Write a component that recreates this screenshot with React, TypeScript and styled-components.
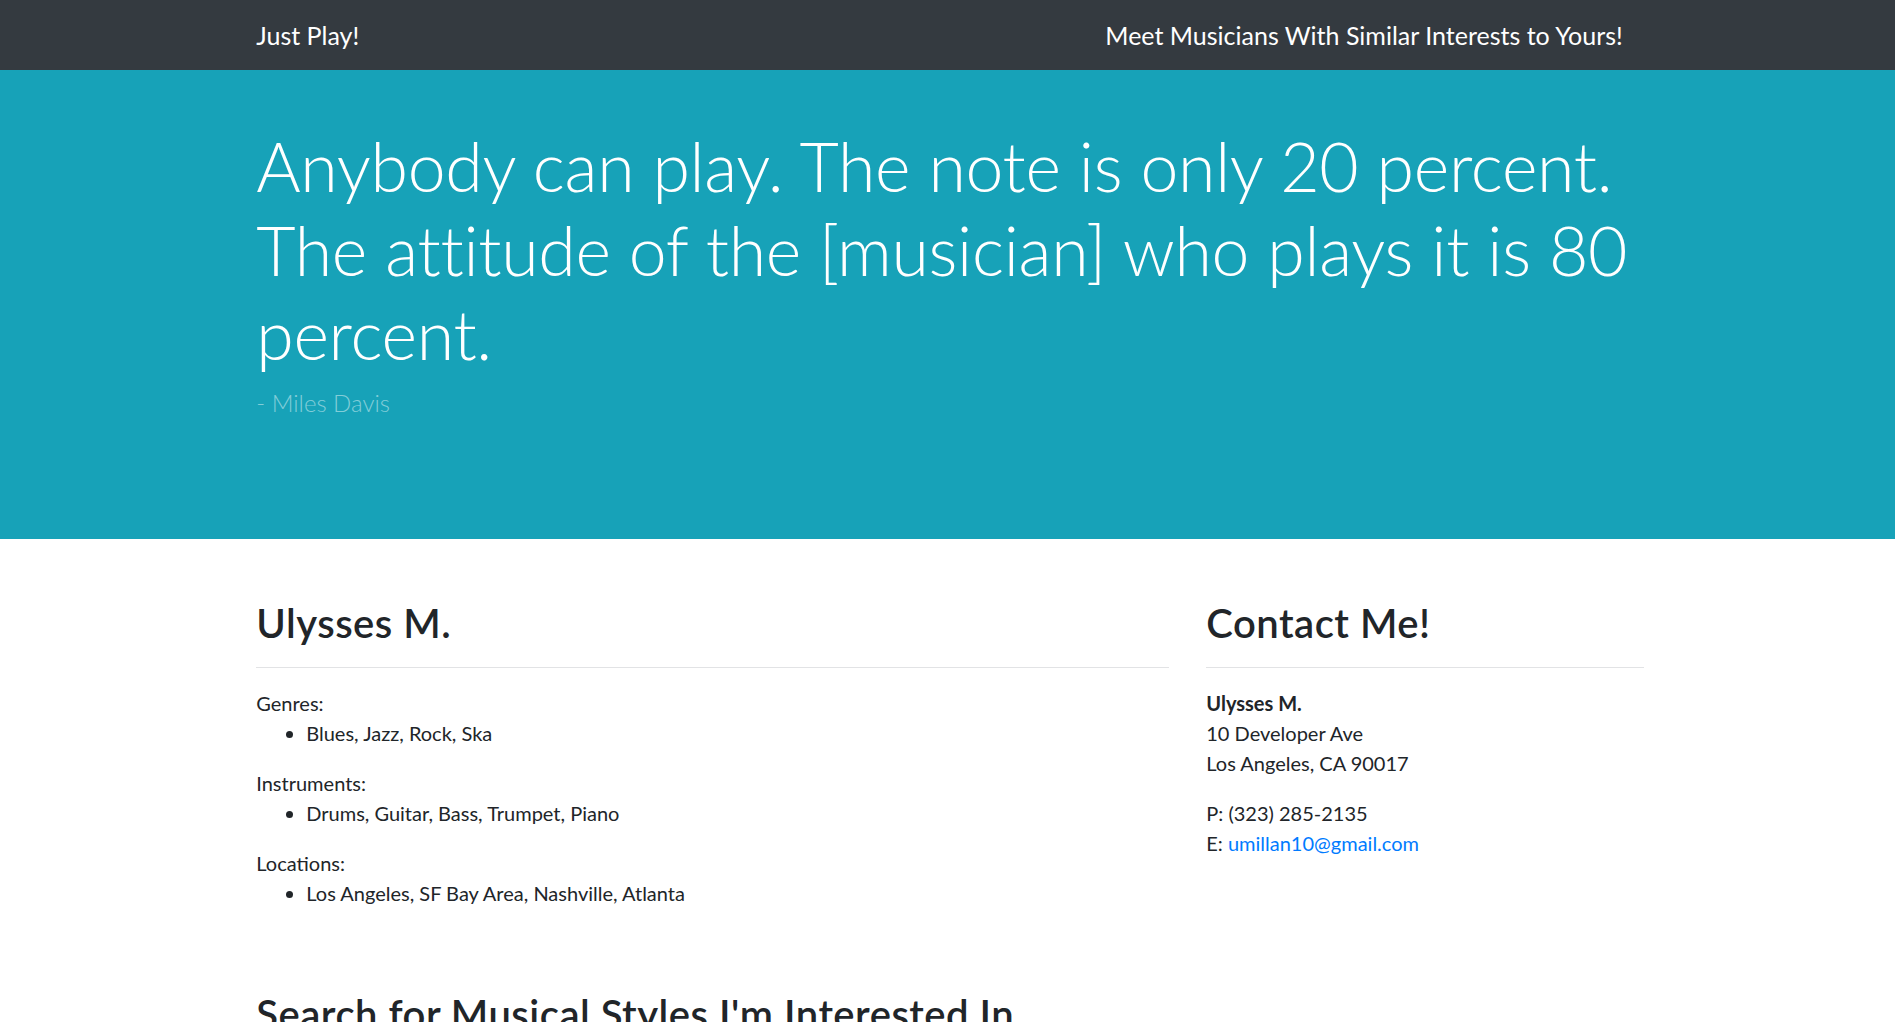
import React from "react";
import styled, { createGlobalStyle } from "styled-components";

const GlobalStyle = createGlobalStyle`
  html, body {
    margin: 0;
    padding: 0;
    background: #ffffff;
  }
  body {
    font-family: Lato, "Open Sans", "Liberation Sans", sans-serif;
    font-size: 20px;
    line-height: 30px;
    color: #212529;
  }
  * { box-sizing: border-box; }
`;

const Container = styled.div`
  width: 1425px;
  max-width: 100%;
  margin-left: calc(50% - 710px);
  padding: 0 18.75px;
`;

const NavBar = styled.nav`
  background: #343a40;
  height: 70px;
  display: flex;
  align-items: center;
`;

const NavInner = styled(Container)`
  display: flex;
  align-items: center;
  justify-content: space-between;
`;

const Brand = styled.a`
  color: #ffffff;
  font-size: 25px;
  line-height: 37.5px;
  text-decoration: none;
  white-space: nowrap;
  padding-top: 2px;
`;

const NavText = styled.span`
  color: #ffffff;
  font-size: 25px;
  line-height: 37.5px;
  padding-right: 21px;
  padding-top: 2px;
  white-space: nowrap;
`;

const Jumbotron = styled.header`
  background: #17a2b8;
  padding: 54px 0 118px;
`;

const Quote = styled.h1`
  margin: 0;
  color: #ffffff;
  font-weight: 300;
  font-size: 68px;
  line-height: 84px;
  letter-spacing: -0.3px;
`;

const QuoteFooter = styled.p`
  margin: 9px 0 0;
  color: #82cdd8;
  font-weight: 300;
  font-size: 24px;
  line-height: 36px;
`;

const Main = styled(Container)`
  padding-top: 60px;
`;

const Row = styled.div`
  display: grid;
  grid-template-columns: minmax(0, 912.5fr) minmax(0, 437.5fr);
  column-gap: 37.5px;
`;

const Column = styled.section``;

const SectionTitle = styled.h2`
  margin: 0 0 20px;
  padding-bottom: 20px;
  border-bottom: 1px solid #e2e3e5;
  font-size: 40px;
  line-height: 48px;
  font-weight: 600;
  letter-spacing: 0.5px;
  color: #212529;
`;

const PlainTitle = styled(SectionTitle)`
  margin-top: 62px;
  border-bottom: none;
`;

const Label = styled.p`
  margin: 0;
`;

const List = styled.ul`
  margin: 0 0 20px;
  padding-left: 50px;
`;

const Address = styled.address`
  font-style: normal;
  margin: 0 0 20px;
`;

const Strong = styled.strong`
  font-weight: 700;
  display: block;
`;

const Line = styled.div``;

const MailLink = styled.a`
  color: #007bff;
  text-decoration: none;
`;

const profile = [
  { label: "Genres:", items: "Blues, Jazz, Rock, Ska" },
  { label: "Instruments:", items: "Drums, Guitar, Bass, Trumpet, Piano" },
  { label: "Locations:", items: "Los Angeles, SF Bay Area, Nashville, Atlanta" },
];

export default function App() {
  return (
    <>
      <GlobalStyle />
      <NavBar>
        <NavInner>
          <Brand href="#">Just Play!</Brand>
          <NavText>Meet Musicians With Similar Interests to Yours!</NavText>
        </NavInner>
      </NavBar>
      <Jumbotron>
        <Container>
          <Quote>
            Anybody can play. The note is only 20 percent. The attitude of the
            [musician] who plays it is 80 percent.
          </Quote>
          <QuoteFooter>- Miles Davis</QuoteFooter>
        </Container>
      </Jumbotron>
      <Main>
        <Row>
          <Column>
            <SectionTitle>Ulysses M.</SectionTitle>
            {profile.map((g) => (
              <div key={g.label}>
                <Label>{g.label}</Label>
                <List>
                  <li>{g.items}</li>
                </List>
              </div>
            ))}
          </Column>
          <Column>
            <SectionTitle>Contact Me!</SectionTitle>
            <Address>
              <Strong>Ulysses M.</Strong>
              <Line>10 Developer Ave</Line>
              <Line>Los Angeles, CA 90017</Line>
            </Address>
            <Address>
              <Line>P: (323) 285-2135</Line>
              <Line>
                E: <MailLink href="#">umillan10@gmail.com</MailLink>
              </Line>
            </Address>
          </Column>
        </Row>
        <PlainTitle>Search for Musical Styles I'm Interested In</PlainTitle>
      </Main>
    </>
  );
}
